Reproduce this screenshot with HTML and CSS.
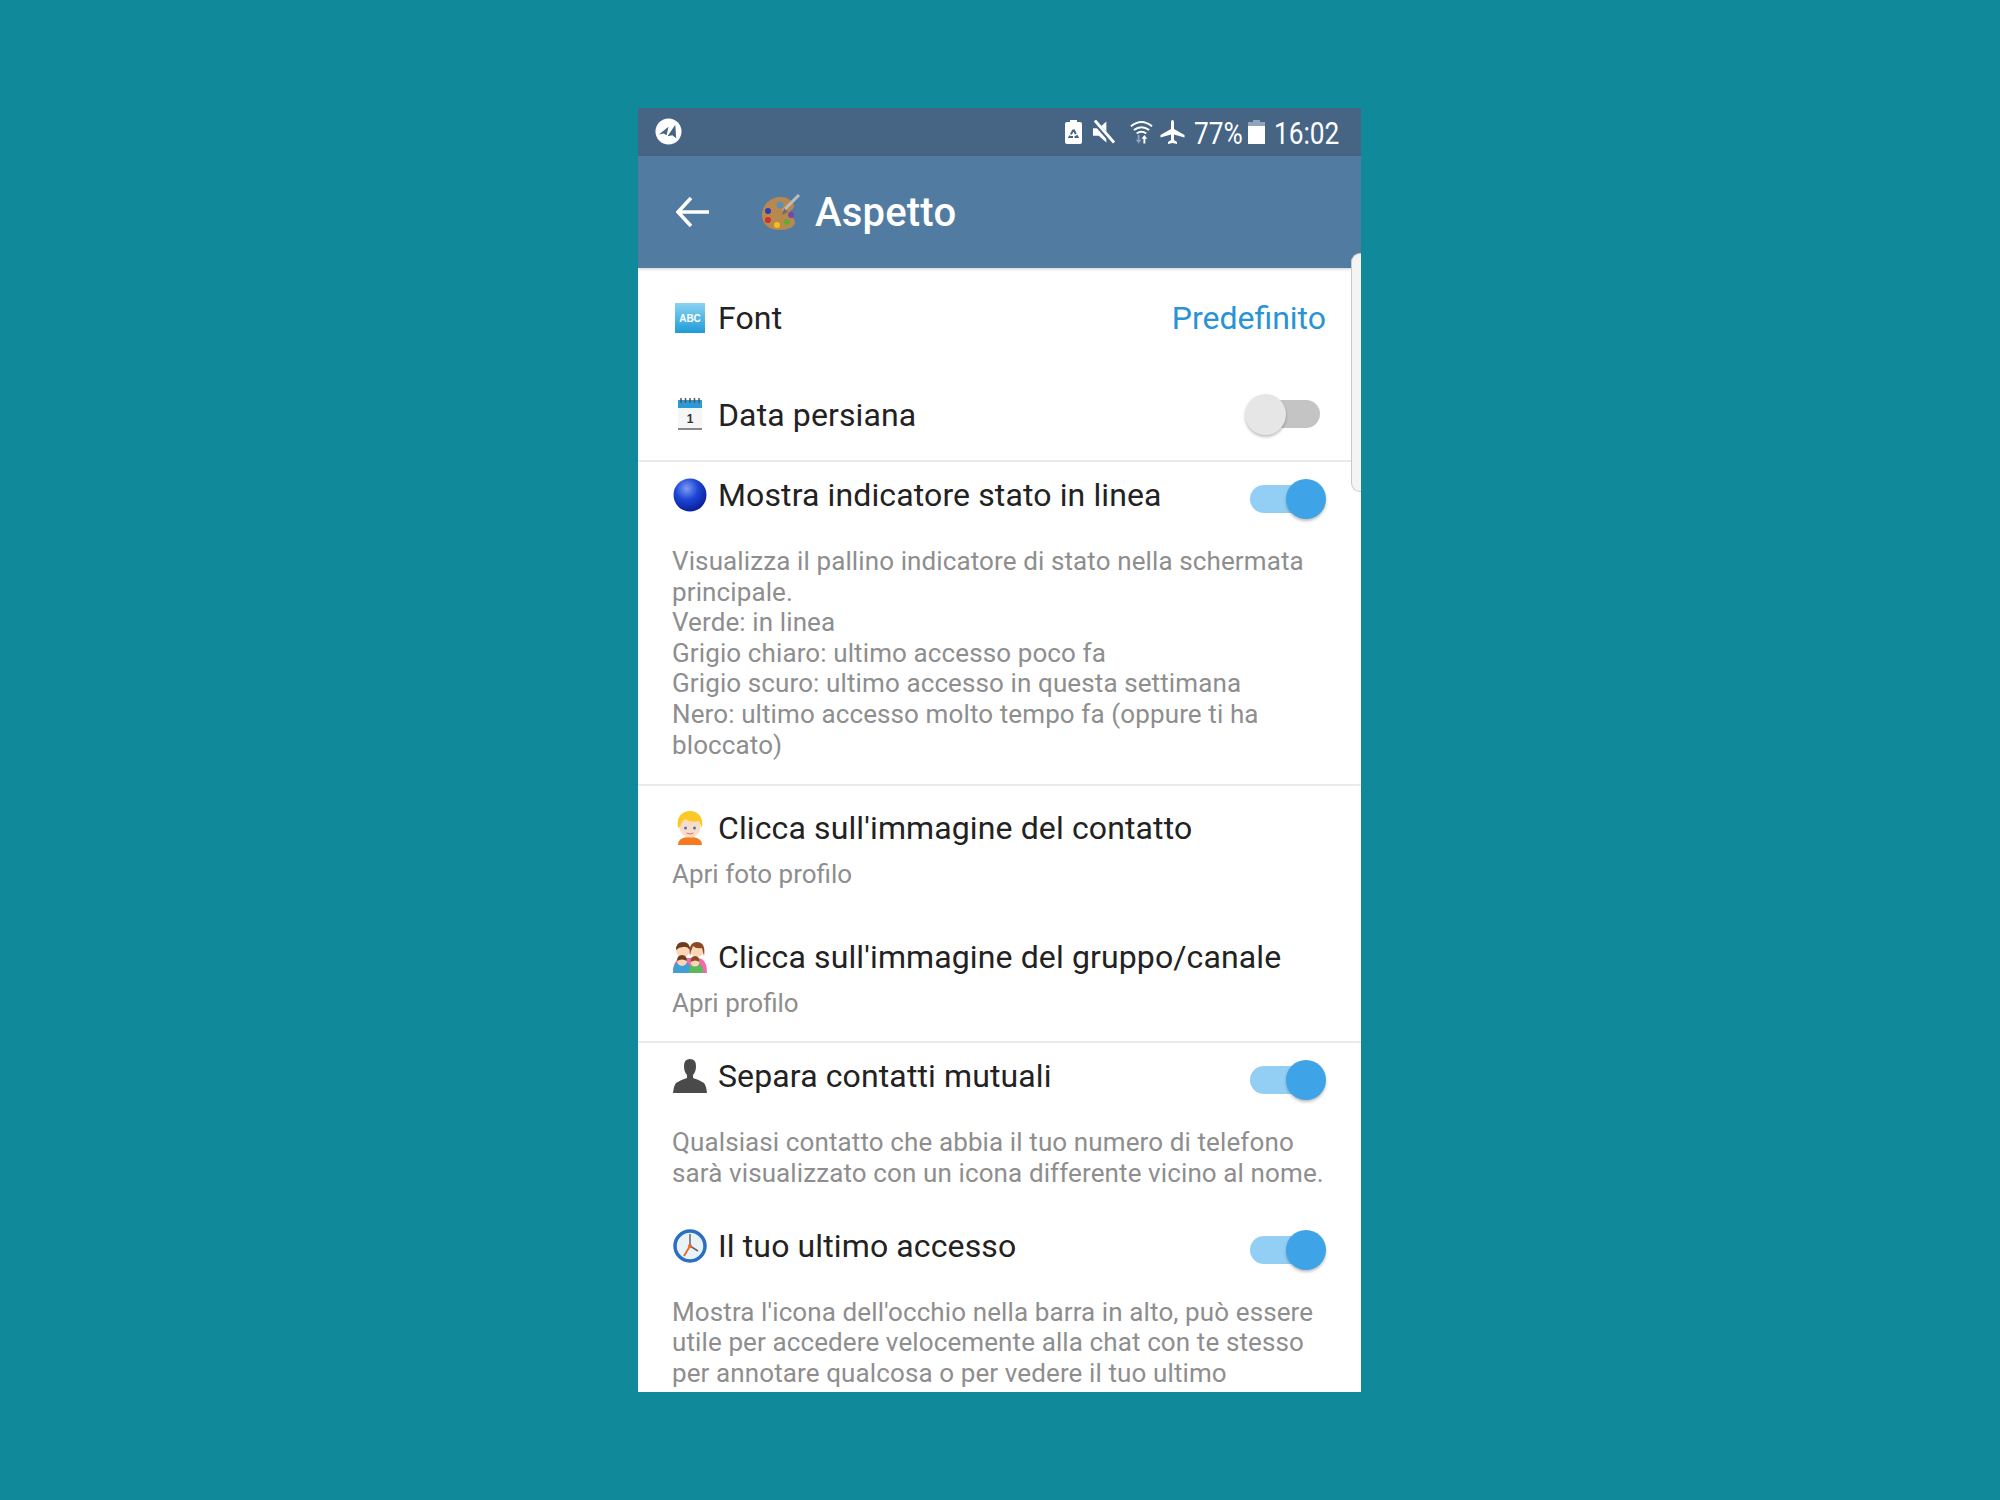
FILE: index.html
```html
<!DOCTYPE html>
<html lang="it">
<head>
    <meta charset="UTF-8">
    <title>Aspetto</title>
    <link rel="stylesheet" href="styles.css">
</head>
<body>
    <div class="phone">
        <div class="status-bar">
            <svg class="logo" viewBox="0 0 28 28">
                <circle cx="14" cy="14" r="13.5" fill="#fff"/>
                <path d="M4 17 14 9l-2 9-3-2z M13 19 21 7l1 14-4-3z" fill="#466483"/>
            </svg>
            <div class="status-icons">
                <svg class="st-saver" viewBox="0 0 17 24">
                    <path d="M5 0h7v2h3a2 2 0 0 1 2 2v18a2 2 0 0 1-2 2H2a2 2 0 0 1-2-2V4a2 2 0 0 1 2-2h3z" fill="#fff"/>
                    <path d="M8.500 9.500l4 7.500H4.500z" fill="none" stroke="#466483" stroke-width="2" stroke-dasharray="5 1.500"/>
                </svg>
                <svg class="st-mute" viewBox="0 0 24 24">
                    <path d="M1 8h6l8-7v22l-8-7H1z" fill="#fff"/>
                    <path d="M1.500 0 21.500 23" stroke="#466483" stroke-width="5"/>
                    <path d="M3 0 23 23" stroke="#fff" stroke-width="3"/>
                </svg>
                <svg class="st-wifi" viewBox="0 0 24 24">
                    <path d="M1 6q11-9 22 0M4 10q8-6 16 0M7 13.500q5-3.500 10 0" fill="none" stroke="#fff" stroke-width="2"/>
                    <path d="M15 15l3 4h-2v5h-2v-5h-2z" fill="#fff"/>
                    <path d="M9 24l-3-4h2v-5h2v5h2z" fill="#8fa4bb"/>
                </svg>
                <svg class="st-plane" viewBox="0 0 24 24">
                    <path d="M12 0q1.500 0 1.500 3v6L24 15v2.500L13.500 14.500V20l3 2v2L12 23l-4.500 1v-2l3-2v-5.500L0 17.500V15l10.500-6V3Q10.500 0 12 0z" fill="#fff"/>
                </svg>
                <span class="st-text st-percent">77%</span>
                <svg class="st-battery" viewBox="0 0 17 24">
                    <path d="M5 0h7v2h5v5H0V2h5z" fill="#8fa4bb"/>
                    <path d="M0 6h17v18H0z" fill="#fff"/>
                </svg>
                <span class="st-text st-clock">16:02</span>
            </div>
        </div>

        <div class="app-bar">
            <svg class="back" viewBox="0 0 33 32">
                <path d="M15 2 2 16l13 14M3 16h30" fill="none" stroke="#fff" stroke-width="3.500"/>
            </svg>
            <svg class="palette" viewBox="0 0 40 36">
                <path d="M20 3C9 3 1 11 1 21s8 15 17 15 16-3 16-8-6-4-6-8 5-4 5-8-6-9-13-9z" fill="#b9884f"/>
                <circle cx="19" cy="11" r="3.500" fill="#5d8fb5"/>
                <circle cx="7" cy="17" r="3" fill="#2a3fb0"/>
                <circle cx="7" cy="26" r="3" fill="#cf3030"/>
                <circle cx="16" cy="31" r="3" fill="#eec21e"/>
                <circle cx="26" cy="28" r="3" fill="#63a93a"/>
                <circle cx="30" cy="21" r="3" fill="#7b46a8"/>
                <path d="M38 1 22 17" stroke="#bcbcbc" stroke-width="3"/>
                <path d="M23 14l4 4-6 3z" fill="#6f6f6f"/>
            </svg>
            <span class="title">Aspetto</span>
        </div>

        <div class="scrollbar"></div>

        <div class="content">
            <div class="row row-font">
                <svg class="emoji" viewBox="-2 -2 34 34">
                    <defs>
                        <linearGradient id="abc" x1="0" y1="0" x2="0" y2="1">
                            <stop offset="0" stop-color="#8bd3f2"/>
                            <stop offset="1" stop-color="#1f9bd8"/>
                        </linearGradient>
                    </defs>
                    <rect width="30" height="30" fill="url(#abc)"/>
                    <text x="15" y="19" class="abc-text">ABC</text>
                </svg>
                <span class="label">Font</span>
                <span class="value">Predefinito</span>
            </div>

            <div class="row row-date">
                <svg class="emoji" viewBox="-2 0 34 34">
                    <rect x="3" y="2" width="24" height="29" fill="#f6f6f6"/>
                    <rect x="3" y="2" width="24" height="8" fill="#2b9ad6"/>
                    <path d="M3 30h24v2H3z" fill="#888"/>
                    <path d="M6 0v5M10.500 0v5M15 0v5M19.500 0v5M24 0v5" stroke="#555" stroke-width="1.500"/>
                    <text x="15" y="25" class="cal-text">1</text>
                </svg>
                <span class="label">Data persiana</span>
                <div class="toggle toggle-off"><span class="track"></span><span class="thumb"></span></div>
            </div>

            <div class="section">
                <div class="row">
                    <svg class="emoji" viewBox="0 0 32 32">
                        <defs>
                            <radialGradient id="ball" cx="0.400" cy="0.300" r="0.700">
                                <stop offset="0" stop-color="#7d9cf0"/>
                                <stop offset="0.500" stop-color="#1c46d6"/>
                                <stop offset="1" stop-color="#0a1f9c"/>
                            </radialGradient>
                        </defs>
                        <circle cx="16" cy="16" r="15.500" fill="url(#ball)"/>
                    </svg>
                    <span class="label">Mostra indicatore stato in linea</span>
                    <div class="toggle"><span class="track"></span><span class="thumb"></span></div>
                </div>
                <p class="desc">Visualizza il pallino indicatore di stato nella schermata<br>principale.<br>Verde: in linea<br>Grigio chiaro: ultimo accesso poco fa<br>Grigio scuro: ultimo accesso in questa settimana<br>Nero: ultimo accesso molto tempo fa (oppure ti ha<br>bloccato)</p>
            </div>

            <div class="section section-tap">
                <div class="row">
                    <svg class="emoji" viewBox="0 0 32 34">
                        <path d="M4 34q0-8 12-8t12 8z" fill="#f47b20"/>
                        <circle cx="16" cy="16" r="10.500" fill="#fbdcc4"/>
                        <path d="M4 17C2 5 9 0 16 0s14 5 12 17l-3-7q-8 2-14-2-3 2-5 8z" fill="#fbc926"/>
                        <circle cx="11.500" cy="17" r="1.500" fill="#3d7cc9"/>
                        <circle cx="20.500" cy="17" r="1.500" fill="#3d7cc9"/>
                        <path d="M12.500 22q3.500 2 7 0" fill="none" stroke="#d9705a"/>
                    </svg>
                    <span class="label">Clicca sull'immagine del contatto</span>
                </div>
                <p class="desc desc-tight">Apri foto profilo</p>

                <div class="row row-next">
                    <svg class="emoji" viewBox="0 0 34 32">
                        <circle cx="10" cy="9" r="7" fill="#fbd5b5"/>
                        <path d="M3 9Q3 1 10 1t7 8q-3-4-7-3-4 0-7 3z" fill="#6d3b1e"/>
                        <circle cx="24" cy="9" r="7" fill="#fbd5b5"/>
                        <path d="M17 15Q15 1 24 1t7 14l-2-8q-6 1-9-2-2 4-3 10z" fill="#8a4a24"/>
                        <path d="M0 32q0-15 10-15h14q10 0 10 15z" fill="#f06ba8"/>
                        <path d="M0 32q0-12 9-12t9 12z" fill="#3f9fd6"/>
                        <circle cx="9" cy="20" r="5" fill="#fbd5b5"/>
                        <path d="M4 20q0-6 5-6t5 6q-5-3-10 0z" fill="#6d3b1e"/>
                        <path d="M16 32q0-10 7-10t7 10z" fill="#5cb85c"/>
                        <circle cx="22" cy="21" r="4.500" fill="#fbd5b5"/>
                        <path d="M17.500 21q0-6 4.500-6t4.500 6q-4-3-9 0z" fill="#8a4a24"/>
                    </svg>
                    <span class="label">Clicca sull'immagine del gruppo/canale</span>
                </div>
                <p class="desc desc-tight">Apri profilo</p>
            </div>

            <div class="section section-last">
                <div class="row">
                    <svg class="emoji" viewBox="0 0 34 34">
                        <path d="M11 7q0-7 6-7t6 7q0 6-3 9v3q7 2 11 5 2 2 3 10H0q1-8 3-10 4-3 11-5v-3q-3-3-3-9z" fill="#4a4a4a"/>
                    </svg>
                    <span class="label">Separa contatti mutuali</span>
                    <div class="toggle"><span class="track"></span><span class="thumb"></span></div>
                </div>
                <p class="desc">Qualsiasi contatto che abbia il tuo numero di telefono<br>sarà visualizzato con un icona differente vicino al nome.</p>

                <div class="row row-access">
                    <svg class="emoji" viewBox="0 0 34 34">
                        <circle cx="17" cy="17" r="15" fill="#eaf2f9" stroke="#2a6fc4" stroke-width="3.500"/>
                        <path d="M17 17V5M17 17l8 5" fill="none" stroke="#666" stroke-width="1.500"/>
                        <path d="M17 17 11 27" fill="none" stroke="#e8702a" stroke-width="2"/>
                        <circle cx="17" cy="17" r="2" fill="#e8702a"/>
                    </svg>
                    <span class="label">Il tuo ultimo accesso</span>
                    <div class="toggle"><span class="track"></span><span class="thumb"></span></div>
                </div>
                <p class="desc">Mostra l'icona dell'occhio nella barra in alto, può essere<br>utile per accedere velocemente alla chat con te stesso<br>per annotare qualcosa o per vedere il tuo ultimo</p>
            </div>
        </div>
    </div>
</body>
</html>
```

FILE: styles.css
```css
body {
    font-family: Roboto, sans-serif;
    background-color: #10899b;
    margin: 0;
    height: 1500px;
    display: flex;
    align-items: center;
    justify-content: center;
}
.phone {
    width: 723px;
    height: 1284px;
    margin-right: 1px;
    background: #fff;
    overflow: hidden;
    display: flex;
    flex-direction: column;
    position: relative;
}
.status-bar {
    height: 48px;
    flex: none;
    background: #466483;
    display: flex;
    align-items: center;
    justify-content: space-between;
    padding: 0 21px 0 17px;
    box-sizing: border-box;
}
.logo {
    width: 27px;
    height: 27px;
    margin-bottom: 2px;
}
.status-icons {
    display: flex;
    align-items: center;
}
.status-icons svg {
    height: 24px;
    flex: none;
}
.st-saver { width: 17px; }
.st-mute { width: 23px; margin-left: 10px; }
.st-wifi { width: 23px; margin-left: 15px; }
.st-plane { width: 25px; margin-left: 7px; }
.st-battery { width: 17px; margin-left: 5px; }
.st-text {
    color: #fff;
    font-size: 32px;
    line-height: 50px;
    height: 48px;
    display: inline-block;
    transform: scaleX(0.82);
    transform-origin: left center;
    white-space: nowrap;
}
.st-percent { width: 49px; margin-left: 9px; }
.st-clock { width: 66px; margin-left: 9px; }

.app-bar {
    height: 112px;
    flex: none;
    background: #527ba1;
    display: flex;
    align-items: center;
    box-shadow: 0 1px 3px rgba(0, 0, 0, 0.2);
    position: relative;
}
.back {
    width: 33px;
    height: 32px;
    margin-left: 38px;
}
.palette {
    width: 40px;
    height: 36px;
    margin-left: 52px;
}
.title {
    color: #fff;
    font-size: 40px;
    font-weight: 500;
    letter-spacing: 0.2px;
    margin-left: 14px;
}

.content {
    flex: 1;
    color: #222;
}
.scrollbar {
    position: absolute;
    top: 145px;
    right: 0;
    width: 10px;
    height: 239px;
    box-sizing: border-box;
    background: #f4f4f4;
    border: 1px solid #c9c9c9;
    border-right: none;
    border-radius: 9px 0 0 9px;
}
.row {
    display: flex;
    align-items: center;
    padding: 0 35px 0 34px;
    height: 40px;
}
.row-font {
    height: 98px;
    padding-top: 2px;
    box-sizing: border-box;
}
.row-date {
    height: 96px;
    padding-top: 4px;
    box-sizing: border-box;
    border-bottom: 2px solid #eaeaea;
}
.emoji {
    width: 34px;
    height: 34px;
    flex: none;
    margin: 0 11px 0 1px;
}
.abc-text {
    fill: #fff;
    font: 700 10px "Liberation Sans", sans-serif;
    text-anchor: middle;
}
.cal-text {
    fill: #333;
    font: 700 12px "Liberation Sans", sans-serif;
    text-anchor: middle;
}
.label {
    flex: 1;
    font-size: 32px;
    line-height: 40px;
    letter-spacing: 0.12px;
    white-space: nowrap;
}
.value {
    font-size: 32px;
    line-height: 40px;
    color: #2a93d5;
}
.section {
    padding: 13px 0 24px;
    border-bottom: 2px solid #eaeaea;
}
.section-tap {
    padding-top: 22px;
    padding-bottom: 23px;
}
.section-last {
    border-bottom: none;
}
.desc {
    margin: 31px 35px 0 34px;
    font-size: 26px;
    line-height: 30.6px;
    letter-spacing: 0.11px;
    color: #8e8e8e;
    white-space: nowrap;
}
.desc-tight {
    margin-top: 11px;
    letter-spacing: 0;
}
.row-next {
    margin-top: 47px;
}
.row-access {
    margin-top: 37px;
}
.toggle {
    position: relative;
    width: 76px;
    height: 40px;
    flex: none;
}
.track {
    position: absolute;
    left: 0;
    top: 10px;
    width: 70px;
    height: 28px;
    border-radius: 14px;
    background: #93cff5;
}
.thumb {
    position: absolute;
    right: 0;
    top: 4px;
    width: 40px;
    height: 40px;
    border-radius: 50%;
    background: #3fa3e8;
    box-shadow: 0 2px 3px rgba(0, 0, 0, 0.25);
}
.toggle-off .track {
    left: 6px;
    top: 5px;
    width: 64px;
    background: #c4c4c4;
}
.toggle-off .thumb {
    right: auto;
    left: -5px;
    top: -1px;
    width: 41px;
    height: 41px;
    background: #e6e6e6;
}
```
